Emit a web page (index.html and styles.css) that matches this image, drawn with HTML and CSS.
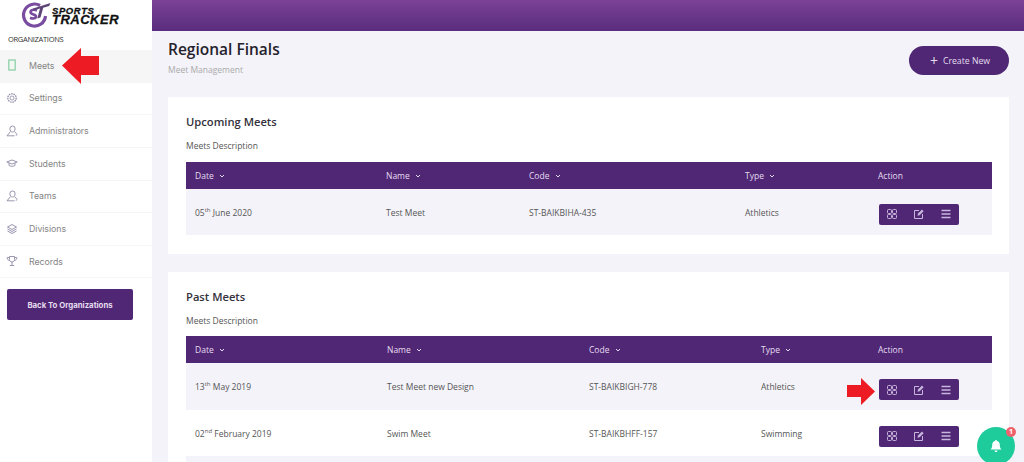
FILE: index.html
```html
<!DOCTYPE html>
<html lang="en">
<head>
<meta charset="utf-8">
<title>Regional Finals</title>
<link rel="stylesheet" href="styles.css">
</head>
<body>
<svg class="sprite" width="0" height="0" aria-hidden="true">
  <symbol id="i-grid" viewBox="0 0 10 10"><g fill="none" stroke="currentColor" stroke-width="1"><rect x=".5" y=".5" width="4" height="4" rx="1"/><rect x="5.500" y=".5" width="4" height="4" rx="1"/><rect x=".5" y="5.500" width="4" height="4" rx="1"/><rect x="5.500" y="5.500" width="4" height="4" rx="1"/></g></symbol>
  <symbol id="i-edit" viewBox="0 0 10 10"><path d="M8.500 5v4.500h-8v-8H5" fill="none" stroke="currentColor" stroke-width="1"/><path d="M3.500 6.800 4 4.600 8 .6l1.600 1.600-4 4z" fill="currentColor"/></symbol>
  <symbol id="i-menu" viewBox="0 0 10 10"><path d="M.5 1.500h9M.5 5h9M.5 8.500h9" stroke="currentColor" stroke-width="1.300"/></symbol>
  <symbol id="i-caret" viewBox="0 0 6 4"><path d="M1 1l2 2 2-2" fill="none" stroke="currentColor" stroke-width="1"/></symbol>
  <symbol id="i-person" viewBox="0 0 12 12"><path d="M6.500 1a2.600 2.600 0 0 1 2.600 2.800C9.100 5.500 8 7 6.500 7S3.900 5.500 3.900 3.800A2.600 2.600 0 0 1 6.500 1zM4.500 6.500 1 10.800h7.500M8.500 6.500l2.500 2.800-1 1.500" fill="none" stroke="currentColor" stroke-width=".9"/></symbol>
</svg>

<div class="app">
  <aside class="sidebar">
    <div class="logo">
      <svg class="logo-mark" viewBox="0 0 30 27" width="30" height="27" aria-hidden="true">
        <path d="M19 4.500A11 11 0 1 0 24.500 15" fill="none" stroke="#7a4ca0" stroke-width="3.200"/>
        <path d="M16 9.500c-3.500-1.500-6.500-.5-6.500 1.500 0 3 5.500 2 5.500 4.500 0 2-3 2.500-6 1.200" fill="none" stroke="#7a4ca0" stroke-width="2.600"/>
        <path d="M12 7.500 29.500 2l-1.300 3-6 1.800-2.700 9.700-3.200 1L19 7.500l-6 1.800z" fill="#5f4478"/>
      </svg>
      <div class="logo-text"><span class="logo-small">SPORTS</span><span class="logo-big">TRACKER</span></div>
    </div>
    <div class="org-label">ORGANIZATIONS</div>
    <nav class="nav">
      <a class="nav-item active"><svg class="nav-icon" viewBox="0 0 12 12"><rect x="2.800" y="1" width="6.400" height="10" fill="#f3f7f2" stroke="#8fd0aa" stroke-width="1.300"/></svg>Meets</a>
      <a class="nav-item"><svg class="nav-icon" viewBox="0 0 12 12"><circle cx="6" cy="6" r="2" fill="none" stroke="currentColor" stroke-width=".8"/><circle cx="6" cy="6" r="4.200" fill="none" stroke="currentColor" stroke-width="1.300" stroke-dasharray="1.500 .8"/></svg>Settings</a>
      <a class="nav-item"><svg class="nav-icon"><use href="#i-person"/></svg>Administrators</a>
      <a class="nav-item"><svg class="nav-icon" viewBox="0 0 12 12"><path d="M.8 5 6 3l5.200 2L6 7zM3 6.200v2.300c1.800 1 4.200 1 6 0V6.200" fill="none" stroke="currentColor" stroke-width=".9"/></svg>Students</a>
      <a class="nav-item"><svg class="nav-icon"><use href="#i-person"/></svg>Teams</a>
      <a class="nav-item"><svg class="nav-icon" viewBox="0 0 12 12"><path d="M6 1.500 10.500 4 6 6.500 1.500 4zM1.500 6 6 8.500 10.500 6M1.500 8 6 10.500 10.500 8" fill="none" stroke="currentColor" stroke-width=".9"/></svg>Divisions</a>
      <a class="nav-item"><svg class="nav-icon" viewBox="0 0 12 12"><path d="M3.500 1.500h5v3c0 1.500-1 2.500-2.500 2.500S3.500 6 3.500 4.500zM3.500 2.500H1.200c0 2 1 3 2.500 3M8.500 2.500h2.300c0 2-1 3-2.500 3M6 7v3M3.800 10.500h4.400" fill="none" stroke="currentColor" stroke-width=".9"/></svg>Records</a>
    </nav>
    <button class="back-btn">Back To Organizations</button>
  </aside>

  <div class="main">
    <header class="topbar"></header>
    <div class="content">
      <div class="page-head">
        <div>
          <h1 class="page-title">Regional Finals</h1>
          <p class="page-sub">Meet Management</p>
        </div>
        <button class="create-btn"><span class="plus">+</span>Create New</button>
      </div>

      <section class="card">
        <h2 class="card-title">Upcoming Meets</h2>
        <p class="card-desc">Meets Description</p>
        <table class="meets upcoming">
          <thead><tr>
            <th class="c1">Date <svg class="caret"><use href="#i-caret"/></svg></th>
            <th class="c2">Name <svg class="caret"><use href="#i-caret"/></svg></th>
            <th class="c3">Code <svg class="caret"><use href="#i-caret"/></svg></th>
            <th class="c4">Type <svg class="caret"><use href="#i-caret"/></svg></th>
            <th class="c5">Action</th>
          </tr></thead>
          <tbody>
            <tr>
              <td>05<sup>th</sup> June 2020</td><td>Test Meet</td><td>ST-BAIKBIHA-435</td><td>Athletics</td>
              <td><div class="actions"><svg><use href="#i-grid"/></svg><svg><use href="#i-edit"/></svg><svg><use href="#i-menu"/></svg></div></td>
            </tr>
          </tbody>
        </table>
      </section>

      <section class="card">
        <h2 class="card-title">Past Meets</h2>
        <p class="card-desc">Meets Description</p>
        <table class="meets past">
          <thead><tr>
            <th class="c1">Date <svg class="caret"><use href="#i-caret"/></svg></th>
            <th class="c2">Name <svg class="caret"><use href="#i-caret"/></svg></th>
            <th class="c3">Code <svg class="caret"><use href="#i-caret"/></svg></th>
            <th class="c4">Type <svg class="caret"><use href="#i-caret"/></svg></th>
            <th class="c5">Action</th>
          </tr></thead>
          <tbody>
            <tr>
              <td>13<sup>th</sup> May 2019</td><td>Test Meet new Design</td><td>ST-BAIKBIGH-778</td><td>Athletics</td>
              <td><div class="actions"><svg><use href="#i-grid"/></svg><svg><use href="#i-edit"/></svg><svg><use href="#i-menu"/></svg></div></td>
            </tr>
            <tr>
              <td>02<sup>nd</sup> February 2019</td><td>Swim Meet</td><td>ST-BAIKBHFF-157</td><td>Swimming</td>
              <td><div class="actions"><svg><use href="#i-grid"/></svg><svg><use href="#i-edit"/></svg><svg><use href="#i-menu"/></svg></div></td>
            </tr>
            <tr><td colspan="5"></td></tr>
          </tbody>
        </table>
      </section>
    </div>
  </div>
</div>

<svg class="arrow arrow-left" viewBox="0 0 38 36" aria-hidden="true"><path d="M0 17.500 19 0v8h18v19H19v9z" fill="#ed1c24"/></svg>
<svg class="arrow arrow-right" viewBox="0 0 28 27" aria-hidden="true"><path d="M28 13.500 14 0v7H0v12h14v8z" fill="#ed1c24"/></svg>

<div class="fab">
  <svg viewBox="0 0 14 14" width="14" height="14" aria-hidden="true"><path d="M7 1a1 1 0 0 1 1 1c2 .5 2.800 2 2.800 4 0 2.500.7 3.500 1.700 4.500h-11C2.500 9.500 3.200 8.500 3.200 6c0-2 .8-3.500 2.800-4a1 1 0 0 1 1-1zM5.500 11.500h3a1.500 1.500 0 0 1-3 0z" fill="#fff"/></svg>
  <span class="badge">1</span>
</div>
</body>
</html>
```

FILE: styles.css
```css
* { box-sizing: border-box; }
html, body { margin: 0; height: 462px; overflow: hidden; }
body { background: #f4f3f9; font-family: "Open Sans", "Liberation Sans", sans-serif; color: #555; position: relative; }
.sprite { position: absolute; }
.app { display: flex; height: 462px; }

.sidebar { width: 152px; flex: none; background: #fff; display: flex; flex-direction: column; }
.logo { height: 33px; display: flex; align-items: flex-start; padding: 1px 0 0 21px; }
.logo-text { display: flex; flex-direction: column; font-family: "Liberation Sans", sans-serif; font-weight: 700; font-style: italic; color: #111; padding-top: 5px; margin-left: 1px; -webkit-text-stroke: .3px #111; }
.logo-small { font-size: 9.500px; line-height: 9px; letter-spacing: .6px; }
.logo-big { font-size: 13px; line-height: 10px; letter-spacing: .5px; }
.org-label { height: 17px; padding: 0 0 0 8px; font-size: 7.500px; line-height: 12px; color: #333; letter-spacing: -.3px; }

.nav { display: flex; flex-direction: column; }
.nav-item { height: 32.650px; display: flex; align-items: center; padding: 0 0 1px 6px; gap: 11px; font-family: "Inter", sans-serif; font-size: 8.800px; color: #858585; border-bottom: 1px solid #f6f6f6; letter-spacing: -.05px; }
.nav-item.active { background: #f6f6f6; }
.nav-icon { width: 12px; height: 12px; color: #8f8aa6; flex: none; }
.back-btn { margin: 11px 0 0 7px; width: 126px; height: 31px; border: 0; border-radius: 2px; background: #4f2775; color: #e6dcef; font-family: "Inter", sans-serif; font-weight: 700; font-size: 7.800px; }

.main { flex: 1; min-width: 0; display: flex; flex-direction: column; }
.topbar { height: 31px; flex: none; background: linear-gradient(#7b4297, #592c7e); }
.content { padding: 0 15px 0 16px; }

.page-head { height: 66px; display: flex; justify-content: space-between; align-items: flex-start; }
.page-title { margin: 7px 0 0; font-size: 15.500px; line-height: 22px; font-weight: 600; color: #24222c; }
.page-sub { margin: 4px 0 0; font-size: 8.500px; line-height: 12px; color: #aaa; }
.create-btn { margin-top: 15px; width: 100px; height: 29px; border: 0; border-radius: 15px; background: #4f2775; color: #e6dcef; font-family: "Open Sans", sans-serif; font-size: 8.700px; display: flex; align-items: center; justify-content: center; padding-left: 8px; }
.plus { font-size: 14px; line-height: 14px; margin-right: 5px; font-weight: 400; }

.card { background: #fff; padding: 16px 17px 19px 18px; margin-bottom: 18px; }
.card-title { margin: 0; font-size: 11.200px; line-height: 18px; font-weight: 600; color: #33313b; }
.card-desc { margin: 8px 0 0; font-size: 8.500px; line-height: 14px; color: #555; }

.meets { width: 806px; margin-top: 9px; border-collapse: separate; border-spacing: 0; table-layout: fixed; font-size: 8.500px; }
.meets th { height: 27px; padding: 0 0 0 9px; background: #4f2775; color: #e6dcef; font-weight: 400; text-align: left; }
.meets td { height: 46px; padding: 0 0 0 9px; color: #555; }
.meets tbody tr:nth-child(odd) td { background: #f4f3f9; }
.meets sup { font-size: 6px; line-height: 0; }
.caret { width: 6px; height: 4px; margin-left: 3px; vertical-align: 1px; }

.past { margin-top: 8px; }
.past tbody tr:first-child td { height: 47px; }
.upcoming .c1 { width: 191px; }
.upcoming .c2 { width: 143px; }
.upcoming .c3 { width: 216px; }
.upcoming .c4 { width: 133px; }
.past .c1 { width: 192px; }
.past .c2 { width: 202px; }
.past .c3 { width: 172px; }
.past .c4 { width: 117px; }

.actions { width: 80px; height: 21px; margin: 4px 0 0 1px; border-radius: 2px; background: #4f2775; color: #c9b6dc; display: flex; align-items: center; gap: 17px; padding-left: 8px; }
.past .actions { margin-top: 6px; }
.actions svg { width: 10px; height: 10px; }

.arrow { position: absolute; }
.arrow-left { left: 62px; top: 48px; width: 38px; height: 36px; }
.arrow-right { left: 847px; top: 378px; width: 28px; height: 27px; }

.fab { position: absolute; left: 977px; top: 427px; width: 38px; height: 38px; border-radius: 50%; background: #1dcb9b; display: flex; align-items: center; justify-content: center; }
.badge { position: absolute; right: -1px; top: 0; width: 10px; height: 10px; border-radius: 50%; background: #f0616d; color: #fff; font-size: 7px; line-height: 10px; text-align: center; font-weight: 700; }
```
